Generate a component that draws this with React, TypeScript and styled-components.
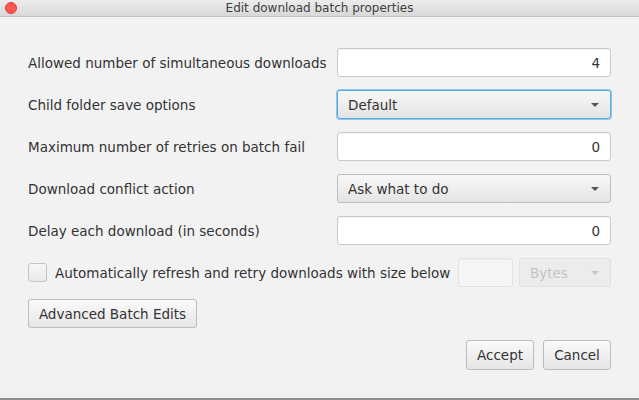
import React from "react";
import styled, { createGlobalStyle, css } from "styled-components";

const Global = createGlobalStyle`
  html, body { margin: 0; padding: 0; background: #f2f2f2; }
  body { font-family: "DejaVu Sans", "Liberation Sans", sans-serif; }
`;

const Window = styled.div`
  width: 639px;
  height: 400px;
  box-sizing: border-box;
  background: #f2f2f2;
  display: flex;
  flex-direction: column;
  border-bottom: 2px solid #8e8e8e;
  color: #333;
  font-size: 13.5px;
`;

const TitleBar = styled.div`
  height: 17px;
  flex: none;
  position: relative;
  display: flex;
  align-items: center;
  justify-content: center;
  background: linear-gradient(#ececec, #d8d8d8);
  border-bottom: 1px solid #c2c2c2;
  box-sizing: border-box;
  font-size: 12px;
  color: #404040;
`;

const CloseDot = styled.span`
  position: absolute;
  left: 5px;
  top: 2px;
  width: 12px;
  height: 12px;
  border-radius: 50%;
  background: #fc5753;
  border: 0.5px solid #df3e3a;
  box-sizing: border-box;
`;

const Content = styled.div`
  flex: 1;
  display: flex;
  flex-direction: column;
  padding: 31px 28px 0 28px;
`;

const Form = styled.div`
  display: grid;
  grid-template-columns: 1fr 274px;
  row-gap: 13px;
`;

const Label = styled.div`
  height: 29px;
  display: flex;
  align-items: center;
  white-space: nowrap;
`;

const fieldBase = css`
  height: 29px;
  box-sizing: border-box;
  border-radius: 3px;
  display: flex;
  align-items: center;
`;

const TextField = styled.div<{ $disabled?: boolean }>`
  ${fieldBase};
  justify-content: flex-end;
  padding: 0 10px;
  background: ${(p) => (p.$disabled ? "#f6f6f6" : "#fff")};
  border: 1px solid ${(p) => (p.$disabled ? "#e2e2e2" : "#c9c9c9")};
  box-shadow: inset 0 1px 1px rgba(0, 0, 0, 0.04);
`;

const Select = styled.div<{ $focused?: boolean; $disabled?: boolean }>`
  ${fieldBase};
  justify-content: space-between;
  padding: 0 8px 0 10px;
  background: ${(p) =>
    p.$disabled ? "#ececec" : "linear-gradient(#f8f8f8, #e4e4e4)"};
  border: 1px solid ${(p) => (p.$disabled ? "#e0e0e0" : "#bdbdbd")};
  color: ${(p) => (p.$disabled ? "#c4c4c4" : "#333")};
  ${(p) =>
    p.$focused &&
    css`
      border-color: #5aa8e0;
      box-shadow: 0 0 0 1px #8cc6ef;
    `}
`;

const Arrow = styled.span<{ $disabled?: boolean }>`
  width: 0;
  height: 0;
  border-left: 4px solid transparent;
  border-right: 4px solid transparent;
  border-top: 4px solid ${(p) => (p.$disabled ? "#c6c6c6" : "#555")};
  margin-right: 3px;
`;

const CheckRow = styled.div`
  margin-top: 13px;
  height: 29px;
  display: flex;
  align-items: center;
`;

const Checkbox = styled.span`
  width: 19px;
  height: 19px;
  box-sizing: border-box;
  border: 1px solid #c4c4c4;
  border-radius: 3px;
  background: linear-gradient(#f7f7f7, #e9e9e9);
  flex: none;
`;

const CheckLabel = styled.span`
  margin-left: 8px;
  flex: 1;
  white-space: nowrap;
`;

const SmallField = styled(TextField)`
  width: 55px;
  flex: none;
  margin-right: 6px;
`;

const UnitSelect = styled(Select)`
  width: 92px;
  flex: none;
`;

const Button = styled.button`
  height: 30px;
  box-sizing: border-box;
  padding: 0 8px;
  font-family: inherit;
  font-size: 13.5px;
  color: #333;
  background: linear-gradient(#fafafa, #e6e6e6);
  border: 1px solid #bdbdbd;
  border-radius: 3px;
  cursor: default;
  white-space: nowrap;
`;

const AdvancedRow = styled.div`
  margin-top: 12px;
  display: flex;
`;

const AdvancedButton = styled(Button)`
  height: 29px;
  width: 169px;
`;

const Footer = styled.div`
  margin-top: 12px;
  display: flex;
  justify-content: flex-end;
  gap: 9px;
`;

const DialogButton = styled(Button)`
  width: 68px;
`;

export default function App() {
  return (
    <>
      <Global />
      <Window>
        <TitleBar>
          <CloseDot />
          Edit download batch properties
        </TitleBar>
        <Content>
          <Form>
            <Label>Allowed number of simultaneous downloads</Label>
            <TextField>4</TextField>
            <Label>Child folder save options</Label>
            <Select $focused>
              <span>Default</span>
              <Arrow />
            </Select>
            <Label>Maximum number of retries on batch fail</Label>
            <TextField>0</TextField>
            <Label>Download conflict action</Label>
            <Select>
              <span>Ask what to do</span>
              <Arrow />
            </Select>
            <Label>Delay each download (in seconds)</Label>
            <TextField>0</TextField>
          </Form>
          <CheckRow>
            <Checkbox />
            <CheckLabel>Automatically refresh and retry downloads with size below</CheckLabel>
            <SmallField $disabled />
            <UnitSelect $disabled>
              <span>Bytes</span>
              <Arrow $disabled />
            </UnitSelect>
          </CheckRow>
          <AdvancedRow>
            <AdvancedButton>Advanced Batch Edits</AdvancedButton>
          </AdvancedRow>
          <Footer>
            <DialogButton>Accept</DialogButton>
            <DialogButton>Cancel</DialogButton>
          </Footer>
        </Content>
      </Window>
    </>
  );
}
